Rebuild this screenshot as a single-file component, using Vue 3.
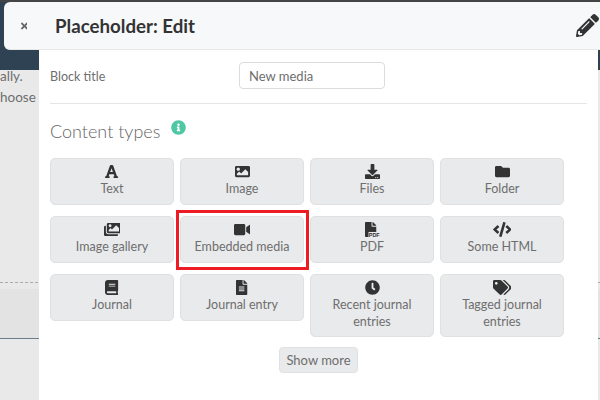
<script setup>
const icons = {
  font: { w: 448, d: 'M432 416h-23.41L277.88 53.69A32 32 0 0 0 247.58 32h-47.16a32 32 0 0 0-30.3 21.69L39.41 416H16a16 16 0 0 0-16 16v32a16 16 0 0 0 16 16h128a16 16 0 0 0 16-16v-32a16 16 0 0 0-16-16h-19.6l23.3-64h152.6l23.3 64H304a16 16 0 0 0-16 16v32a16 16 0 0 0 16 16h128a16 16 0 0 0 16-16v-32a16 16 0 0 0-16-16zM176.85 272L224 142.51 271.15 272z' },
  image: { w: 512, d: 'M464 448H48c-26.51 0-48-21.49-48-48V112c0-26.51 21.49-48 48-48h416c26.51 0 48 21.49 48 48v288c0 26.51-21.49 48-48 48zM112 120c-30.928 0-56 25.072-56 56s25.072 56 56 56 56-25.072 56-56-25.072-56-56-56zM64 384h384V272l-87.515-87.515c-4.686-4.686-12.284-4.686-16.971 0L208 320l-55.515-55.515c-4.686-4.686-12.284-4.686-16.971 0L64 336v48z' },
  download: { w: 512, d: 'M216 0h80c13.3 0 24 10.7 24 24v168h87.7c17.8 0 26.7 21.5 14.1 34.1L269.7 378.3c-7.5 7.5-19.8 7.5-27.3 0L90.1 226.1c-12.6-12.6-3.7-34.1 14.1-34.1H192V24c0-13.3 10.7-24 24-24zm296 376v112c0 13.3-10.7 24-24 24H24c-13.3 0-24-10.7-24-24V376c0-13.3 10.7-24 24-24h146.7l49 49c20.1 20.1 52.5 20.1 72.6 0l49-49H488c13.3 0 24 10.7 24 24zm-124 88c0-11-9-20-20-20s-20 9-20 20 9 20 20 20 20-9 20-20zm64 0c0-11-9-20-20-20s-20 9-20 20 9 20 20 20 20-9 20-20z' },
  folder: { w: 512, d: 'M464 128H272l-64-64H48C21.49 64 0 85.49 0 112v288c0 26.51 21.49 48 48 48h416c26.51 0 48-21.49 48-48V176c0-26.51-21.49-48-48-48z' },
  images: { w: 576, d: 'M480 416v16c0 26.51-21.49 48-48 48H48c-26.51 0-48-21.49-48-48V176c0-26.51 21.49-48 48-48h16v208c0 44.112 35.888 80 80 80h336zm96-80V80c0-26.51-21.49-48-48-48H144c-26.51 0-48 21.49-48 48v256c0 26.51 21.49 48 48 48h384c26.51 0 48-21.49 48-48zM256 128c0 26.51-21.49 48-48 48s-48-21.49-48-48 21.49-48 48-48 48 21.49 48 48zm-96 144l55.515-55.515c4.686-4.686 12.284-4.686 16.971 0L272 256l135.515-135.515c4.686-4.686 12.284-4.686 16.971 0L512 208v112H160v-48z' },
  video: { w: 576, d: 'M336.2 64H47.8C21.4 64 0 85.4 0 111.8v288.4C0 426.6 21.4 448 47.8 448h288.4c26.4 0 47.8-21.4 47.8-47.8V111.8c0-26.4-21.4-47.8-47.8-47.8zm189.4 37.7L416 177.3v157.4l109.6 75.5c21.2 14.6 50.4-.3 50.4-25.8V127.5c0-25.4-29.1-40.4-50.4-25.8z' },
  pdf: { w: 512, d: 'M224 136V0H24C10.7 0 0 10.7 0 24v464c0 13.3 10.7 24 24 24h336c13.3 0 24-10.7 24-24V160H248c-13.2 0-24-10.8-24-24zm160-14.1v6.1H256V0h6.1c6.4 0 12.5 2.5 17 7l97.9 98c4.5 4.5 7 10.6 7 16.9z', pdf: true },
  code: { w: 640, d: 'M278.9 511.5l-61-17.7c-6.4-1.8-10-8.5-8.2-14.9L346.2 8.7c1.8-6.4 8.5-10 14.9-8.2l61 17.7c6.4 1.8 10 8.5 8.2 14.9L293.8 503.3c-1.9 6.4-8.5 10.1-14.9 8.2zm-114-112.2l43.5-46.4c4.6-4.9 4.3-12.7-.8-17.2L117 256l90.6-79.7c5.1-4.5 5.5-12.3.8-17.2l-43.5-46.4c-4.5-4.8-12.1-5.1-17-.5L3.8 247.2c-5.1 4.7-5.1 12.8 0 17.5l144.1 135.1c4.9 4.6 12.5 4.4 17-.5zm327.2.6l144.1-135.1c5.1-4.7 5.1-12.8 0-17.5L492.1 112.1c-4.8-4.5-12.4-4.3-17 .5L431.6 159c-4.6 4.9-4.3 12.7.8 17.2L523 256l-90.6 79.7c-5.1 4.5-5.5 12.3-.8 17.2l43.5 46.4c4.5 4.9 12.1 5.1 17 .6z' },
  book: { w: 448, d: 'M448 360V24c0-13.3-10.7-24-24-24H96C43 0 0 43 0 96v320c0 53 43 96 96 96h328c13.3 0 24-10.7 24-24v-16c0-7.5-3.5-14.3-8.9-18.7-4.2-15.4-4.2-59.3 0-74.7 5.4-4.3 8.9-11.1 8.9-18.6zM128 134c0-3.3 2.7-6 6-6h212c3.3 0 6 2.7 6 6v20c0 3.3-2.7 6-6 6H134c-3.3 0-6-2.7-6-6v-20zm0 64c0-3.3 2.7-6 6-6h212c3.3 0 6 2.7 6 6v20c0 3.3-2.7 6-6 6H134c-3.3 0-6-2.7-6-6v-20zm253.4 250H96c-17.7 0-32-14.3-32-32 0-17.6 14.4-32 32-32h285.4c-1.9 17.1-1.9 46.9 0 64z' },
  file: { w: 384, d: 'M224 136V0H24C10.7 0 0 10.7 0 24v464c0 13.3 10.7 24 24 24h336c13.3 0 24-10.7 24-24V160H248c-13.2 0-24-10.8-24-24zm64 236c0 6.6-5.4 12-12 12H108c-6.6 0-12-5.4-12-12v-8c0-6.6 5.4-12 12-12h168c6.6 0 12 5.4 12 12v8zm0-64c0 6.6-5.4 12-12 12H108c-6.6 0-12-5.4-12-12v-8c0-6.6 5.4-12 12-12h168c6.6 0 12 5.4 12 12v8zm0-72v8c0 6.6-5.4 12-12 12H108c-6.6 0-12-5.4-12-12v-8c0-6.6 5.4-12 12-12h168c6.6 0 12 5.4 12 12zm96-114.1v6.1H256V0h6.1c6.4 0 12.5 2.5 17 7l97.9 98c4.5 4.5 7 10.6 7 16.9z' },
  clock: { w: 512, d: 'M256,8C119,8,8,119,8,256S119,504,256,504,504,393,504,256,393,8,256,8Zm92.49,313h0l-20,25a16,16,0,0,1-22.49,2.5h0l-67-49.72a40,40,0,0,1-15-31.23V112a16,16,0,0,1,16-16h32a16,16,0,0,1,16,16V256l58,42.5A16,16,0,0,1,348.49,321Z' },
  tags: { w: 640, d: 'M497.941 225.941L286.059 14.059A48 48 0 0 0 252.118 0H48C21.49 0 0 21.49 0 48v204.118a48 48 0 0 0 14.059 33.941l211.882 211.882c18.744 18.745 49.136 18.746 67.882 0l204.118-204.118c18.745-18.745 18.745-49.137 0-67.882zM112 160c-26.51 0-48-21.49-48-48s21.49-48 48-48 48 21.49 48 48-21.49 48-48 48zm513.941 133.823L421.823 497.941c-18.745 18.745-49.137 18.745-67.882 0l-.36-.36L527.64 323.522c16.999-16.999 26.36-39.6 26.36-63.64s-9.362-46.641-26.36-63.64L331.397 0h48.721a48 48 0 0 1 33.941 14.059l211.882 211.882c18.745 18.745 18.745 49.137 0 67.882z' }
}
const types = [
  ['Text', 'font'], ['Image', 'image'], ['Files', 'download'], ['Folder', 'folder'],
  ['Image gallery', 'images'], ['Embedded media', 'video'], ['PDF', 'pdf'], ['Some HTML', 'code'],
  ['Journal', 'book'], ['Journal entry', 'file'], ['Recent journal entries', 'clock'], ['Tagged journal entries', 'tags']
].map(([label, icon]) => ({ label, ...icons[icon] }))
</script>

<template>
  <div class="page">
    <div class="topline"></div>
    <div class="navband"></div>
    <div class="bgtext">
      <p>ally.</p>
      <p>hoose</p>
    </div>
    <div class="dotted"></div>
    <div class="bgrow"></div>

    <section class="modal">
      <div class="field">
        <label class="field-label">Block title</label>
        <div class="input">New media</div>
      </div>
      <hr class="rule" />
      <div class="heading">
        <h2>Content types</h2>
        <svg class="info" viewBox="0 0 512 512"><path fill="#4fc7a5" d="M256 8C119 8 8 119 8 256s111 248 248 248 248-111 248-248S393 8 256 8z" /><path fill="#fff" d="M256 118c23.196 0 42 18.804 42 42s-18.804 42-42 42-42-18.804-42-42 18.804-42 42-42zm56 254c0 6.627-5.373 12-12 12h-88c-6.627 0-12-5.373-12-12v-24c0-6.627 5.373-12 12-12h12v-64h-12c-6.627 0-12-5.373-12-12v-24c0-6.627 5.373-12 12-12h64c6.627 0 12 5.373 12 12v100h12c6.627 0 12 5.373 12 12v24z" /></svg>
      </div>
      <div class="grid">
        <button v-for="t in types" :key="t.label" class="type" :class="{ marked: t.label === 'Embedded media' }">
          <svg class="icon" :viewBox="`0 0 ${t.w} 512`">
            <path :d="t.d" />
            <template v-if="t.pdf">
              <rect x="120" y="340" width="392" height="172" fill="#e9eaec" />
              <text x="130" y="495" class="pdf">PDF</text>
            </template>
          </svg>
          <span>{{ t.label }}</span>
        </button>
      </div>
      <div class="more-row"><button class="more">Show more</button></div>
    </section>

    <header class="head">
      <button class="close" aria-label="Close">
        <svg viewBox="0 0 352 512"><path d="M242.72 256l100.07-100.07c12.28-12.28 12.28-32.19 0-44.48l-22.24-22.24c-12.28-12.28-32.19-12.28-44.48 0L176 189.28 75.93 89.21c-12.28-12.28-32.19-12.28-44.48 0L9.21 111.45c-12.28 12.28-12.28 32.19 0 44.48L109.28 256 9.21 356.07c-12.28 12.28-12.28 32.19 0 44.48l22.24 22.24c12.28 12.28 32.2 12.28 44.48 0L176 322.72l100.07 100.07c12.28 12.28 32.2 12.28 44.48 0l22.24-22.24c12.28-12.28 12.28-32.19 0-44.48L242.72 256z" /></svg>
      </button>
      <h1>Placeholder: Edit</h1>
      <svg class="pencil" viewBox="0 0 512 512"><path d="M497.9 142.1l-46.1 46.1c-4.7 4.7-12.3 4.7-17 0l-111-111c-4.7-4.7-4.7-12.3 0-17l46.1-46.1c18.7-18.7 49.1-18.7 67.9 0l60.1 60.1c18.8 18.7 18.8 49.1 0 67.9zM284.2 99.8L21.6 362.4.4 483.9c-2.9 16.4 11.4 30.6 27.8 27.8l121.5-21.3 262.6-262.6c4.7-4.7 4.7-12.3 0-17l-111-111c-4.8-4.7-12.4-4.7-17.1 0zM124.1 339.9c-5.5-5.5-5.5-14.3 0-19.8l154-154c5.5-5.5 14.3-5.5 19.8 0s5.5 14.3 0 19.8l-154 154c-5.5 5.5-14.3 5.5-19.8 0zM88 424h48v36.3l-64.5 11.3-31.1-31.1L51.7 376H88v48z" /></svg>
    </header>
  </div>
</template>

<style scoped>
.page {
  position: relative;
  width: 600px;
  height: 400px;
  overflow: hidden;
  background: #e9e9e9;
  font-family: Lato, "Open Sans", sans-serif;
  color: #6e6e6e;
}
.topline { height: 2px; background: #444; }
.navband { height: 68px; background: #2f4254; }
.bgtext { height: 212px; font-size: 13.5px; line-height: 13px; color: #6e6e6e; }
.bgtext p { margin: 0 0 8px; white-space: nowrap; }
.dotted { border-top: 1px dashed #aaa; }
.bgrow { height: 49px; margin-top: 6px; background: #e3e3e3; border-bottom: 1px solid #6b7b8a; }

.modal {
  position: absolute;
  left: 39px;
  top: 50px;
  width: 559px;
  height: 350px;
  box-sizing: border-box;
  background: #fff;
  padding: 12px 11px 0;
}
.field { display: flex; align-items: center; height: 27px; }
.field-label { width: 189px; padding-top: 1px; font-size: 12.5px; color: #6e6e6e; }
.input {
  box-sizing: border-box;
  width: 146px;
  height: 27px;
  border: 1px solid #dcdcdc;
  border-radius: 4px;
  padding: 0 9px;
  line-height: 26px;
  font-size: 13px;
  color: #6e6e6e;
}
.rule { border: 0; border-top: 1px solid #e6e6e6; margin: 14px 0 0; }
.heading { display: flex; align-items: flex-start; height: 54.4px; padding-top: 15px; box-sizing: border-box; }
.heading h2 { margin: 0; font-size: 18px; line-height: 24px; font-weight: 300; color: #666; }
.info { width: 15px; height: 15px; margin: 1px 0 0 11px; }
.grid {
  display: grid;
  grid-template-columns: repeat(4, 124px);
  column-gap: 6px;
  row-gap: 10.8px;
  align-items: start;
}
.type {
  position: relative;
  display: flex;
  flex-direction: column;
  align-items: center;
  box-sizing: border-box;
  min-height: 47px;
  padding: 5px 10px 6px;
  background: #e9eaec;
  border: 1px solid #dfe0e2;
  border-radius: 5px;
  font: inherit;
  font-size: 12.5px;
  line-height: 17px;
  color: #6e6e6e;
  text-align: center;
}
.type.marked::after {
  content: "";
  position: absolute;
  top: -7px;
  left: -5px;
  right: -6px;
  bottom: -8px;
  border: 3px solid #ed1c24;
}
.icon { height: 15px; width: auto; fill: #333; margin-bottom: 1px; }
.pdf { font: 700 185px "Liberation Sans", sans-serif; fill: #333; }
.more-row { display: flex; justify-content: center; margin-top: 10.4px; }
.more {
  box-sizing: border-box;
  width: 79px;
  height: 26px;
  padding: 0;
  background: #e9eaec;
  border: 1px solid #dfe0e2;
  border-radius: 4px;
  font: inherit;
  font-size: 13px;
  color: #6e6e6e;
}

.head {
  position: absolute;
  left: 4px;
  top: 2px;
  right: 0;
  height: 48px;
  box-sizing: border-box;
  display: flex;
  align-items: center;
  background: #f7f8fa;
  border-bottom: 1px solid #e8e8e8;
  border-radius: 6px 0 0 6px;
}
.close { width: 16px; margin-left: 12px; padding: 0; border: 0; background: none; display: flex; justify-content: center; }
.close svg { height: 10px; fill: #666; }
.head h1 { margin: 0 0 0 23px; font-size: 18.7px; font-weight: 700; color: #333; }
.pencil { width: 23px; height: 23px; margin-left: auto; margin-right: 1px; fill: #333; }
</style>
